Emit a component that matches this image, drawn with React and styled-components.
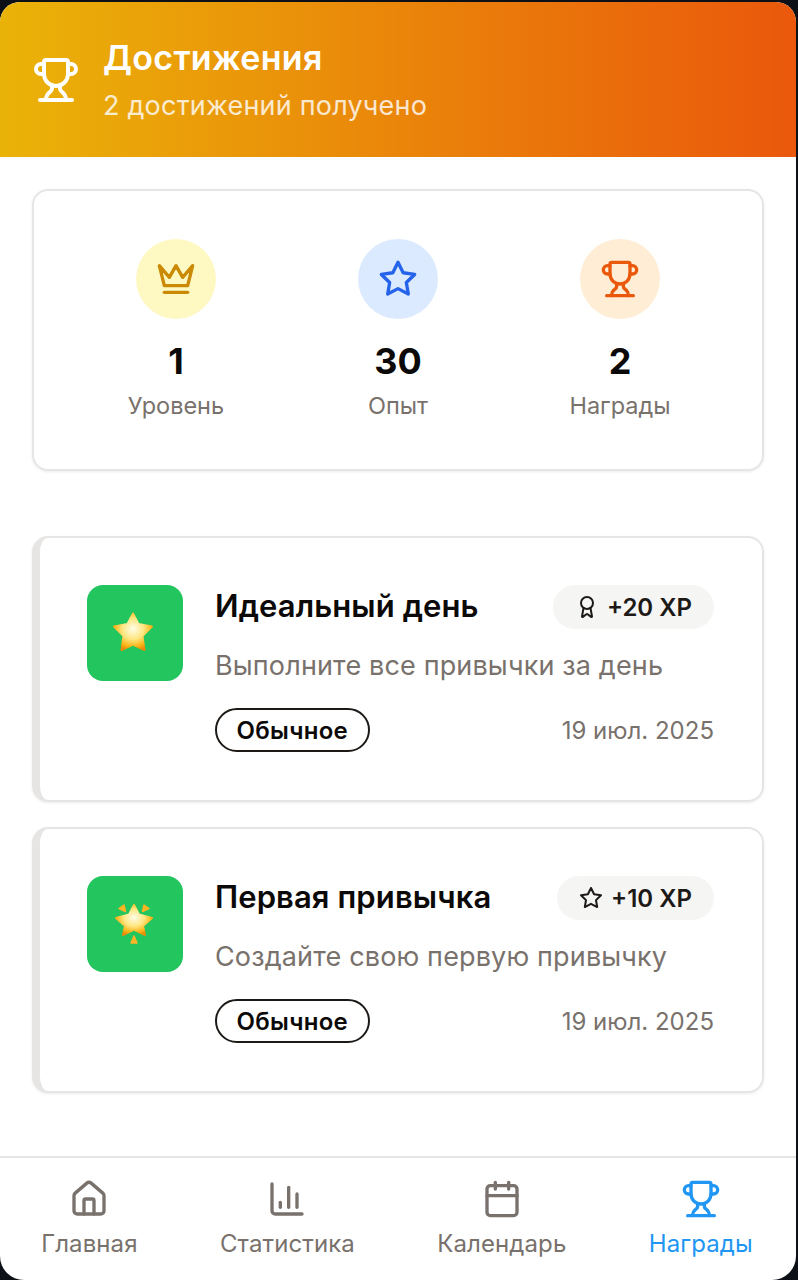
import React from 'react'
import styled, { createGlobalStyle } from 'styled-components'
import { Trophy, Award, House, ChartColumn, Calendar } from 'lucide-react'

const Global = createGlobalStyle`
  html, body {
    margin: 0;
    padding: 0;
    background: #0d1117;
  }
  * {
    box-sizing: border-box;
  }
`

const Screen = styled.div`
  width: 796px;
  height: 1278px;
  margin-top: 2px;
  display: flex;
  flex-direction: column;
  background: #fff;
  border-radius: 20px 20px 24px 24px;
  overflow: hidden;
  font-family: Inter, "Noto Sans", sans-serif;
  color: #0c0a09;
`

const Header = styled.header`
  height: 155px;
  flex-shrink: 0;
  display: flex;
  align-items: center;
  gap: 23px;
  padding: 0 32px;
  color: #fff;
  background: linear-gradient(90deg, #eab308, #ea580c);
`

const HeaderTitle = styled.div`
  font-size: 34px;
  line-height: 40px;
  font-weight: 600;
  letter-spacing: 0.3px;
`

const HeaderSub = styled.div`
  margin-top: 12px;
  font-size: 27px;
  line-height: 32px;
  letter-spacing: 0.2px;
  opacity: 0.8;
`

const Main = styled.main`
  flex: 1;
  display: flex;
  flex-direction: column;
  padding: 32px 32px 0;
`

const Panel = styled.section`
  height: 282px;
  flex-shrink: 0;
  border: 2px solid #e7e5e4;
  border-radius: 16px;
  box-shadow: 0 1px 3px rgba(0, 0, 0, 0.08);
  padding: 48px 31px 0;
  display: grid;
  grid-template-columns: repeat(3, 1fr);
  align-content: start;
`

const Stat = styled.div`
  display: flex;
  flex-direction: column;
  align-items: center;
`

const StatIcon = styled.div`
  width: 80px;
  height: 80px;
  border-radius: 50%;
  display: flex;
  align-items: center;
  justify-content: center;
  background: ${p => p.$bg};
  color: ${p => p.$fg};
`

const StatValue = styled.div`
  margin-top: 22px;
  font-size: 36px;
  line-height: 40px;
  font-weight: 700;
`

const StatLabel = styled.div`
  margin-top: 9px;
  font-size: 23.5px;
  line-height: 32px;
  color: #78716c;
`

const List = styled.div`
  margin-top: 65px;
  display: flex;
  flex-direction: column;
  gap: 25px;
`

const Card = styled.article`
  height: 266px;
  display: flex;
  gap: 32px;
  padding: 47px 48px 0 47px;
  border: 2px solid #e7e5e4;
  border-left-width: 8px;
  border-radius: 16px;
  box-shadow: 0 1px 3px rgba(0, 0, 0, 0.08);
`

const CardIcon = styled.div`
  width: 96px;
  height: 96px;
  flex-shrink: 0;
  border-radius: 16px;
  background: #22c55e;
  display: flex;
  align-items: center;
  justify-content: center;
`

const CardBody = styled.div`
  flex: 1;
  min-width: 0;
`

const Row = styled.div`
  display: flex;
  align-items: center;
  justify-content: space-between;
`

const CardTitle = styled.h3`
  margin: 0 0 2px;
  font-size: 31px;
  line-height: 42px;
  font-weight: 600;
  letter-spacing: 0.1px;
`

const Xp = styled.div`
  height: 44px;
  padding: 0 22px;
  display: flex;
  align-items: center;
  gap: 8px;
  border-radius: 22px;
  background: #f5f5f4;
  font-size: 24px;
  font-weight: 600;
  color: #1c1917;
`

const CardText = styled.p`
  margin: 21px 0 0;
  font-size: 27px;
  line-height: 32px;
  letter-spacing: 0.15px;
  color: #78716c;
`

const CardFoot = styled(Row)`
  margin-top: 26px;
`

const Tag = styled.span`
  height: 44px;
  padding: 0 19.5px;
  display: flex;
  align-items: center;
  border: 2px solid #1c1917;
  border-radius: 22px;
  font-size: 24px;
  font-weight: 600;
  letter-spacing: 0.3px;
`

const Date = styled.span`
  font-size: 24px;
  color: #78716c;
`

const Nav = styled.nav`
  height: 124px;
  flex-shrink: 0;
  display: flex;
  justify-content: space-around;
  padding: 21px 2px 0 0;
  border-top: 2px solid #e7e5e4;
`

const NavItem = styled.div`
  display: flex;
  flex-direction: column;
  align-items: center;
  gap: 9px;
  font-size: 24px;
  line-height: 32px;
  letter-spacing: 0.1px;
  color: ${p => (p.$active ? '#2196f3' : '#78716c')};
`

const Line = ({ size, children }) => (
  <svg width={size} height={size} viewBox="0 0 24 24" fill="none" stroke="currentColor" strokeWidth="2" strokeLinecap="round" strokeLinejoin="round">
    {children}
  </svg>
)

const CrownIcon = ({ size }) => (
  <Line size={size}>
    <path d="m2 4 3 12h14l3-12-6 7-4-7-4 7-6-7z" />
    <path d="M5 20h14" />
  </Line>
)

const StarIcon = ({ size }) => (
  <Line size={size}>
    <polygon points="12 2 15.09 8.26 22 9.27 17 14.14 18.18 21.02 12 17.77 5.82 21.02 7 14.14 2 9.27 8.91 8.26 12 2" />
  </Line>
)

const EmojiStar = ({ id, sparkle }) => (
  <svg width="48" height="48" viewBox="0 0 48 48" aria-hidden="true">
    <defs>
      <radialGradient id={id} cx="50%" cy="42%" r="60%">
        <stop offset="0%" stopColor="#fffde8" />
        <stop offset="48%" stopColor="#ffe680" />
        <stop offset="82%" stopColor="#fcb316" />
        <stop offset="100%" stopColor="#e98a0a" />
      </radialGradient>
    </defs>
    {sparkle ? (
      <>
        <path d="M23 5 L28 14.5 L41 18 L32 26 L34 35 L23 29.5 L12 35 L14 26 L5 18 L18 14.5 Z" fill={`url(#${id})`} stroke={`url(#${id})`} strokeWidth="2" strokeLinejoin="round" />
        <path d="M8 8.5 L13 5 L14.5 11.5 Z M38 8.5 L33 5 L31.5 11.5 Z M23 36 L26 43 L20 43 Z" fill="#fbb424" stroke="#fbb424" strokeWidth="1.5" strokeLinejoin="round" />
      </>
    ) : (
      <path d="M22 4.5 L27.5 15 L41 17.5 L31.5 27 L33.5 41 L22 35.5 L10.5 41 L12.5 27 L3 17.5 L16.5 15 Z" fill={`url(#${id})`} stroke={`url(#${id})`} strokeWidth="2" strokeLinejoin="round" />
    )}
  </svg>
)

const stats = [
  { icon: CrownIcon, value: '1', label: 'Уровень', bg: '#fef9c3', fg: '#ca8a04' },
  { icon: StarIcon, value: '30', label: 'Опыт', bg: '#dbeafe', fg: '#2563eb' },
  { icon: Trophy, value: '2', label: 'Награды', bg: '#ffedd5', fg: '#ea580c' },
]

const achievements = [
  { id: 'a', title: 'Идеальный день', xp: '+20 XP', icon: Award, text: 'Выполните все привычки за день' },
  { id: 'b', title: 'Первая привычка', xp: '+10 XP', icon: StarIcon, text: 'Создайте свою первую привычку', sparkle: true },
]

const tabs = [
  { icon: House, label: 'Главная' },
  { icon: ChartColumn, label: 'Статистика' },
  { icon: Calendar, label: 'Календарь' },
  { icon: Trophy, label: 'Награды', active: true },
]

const App = () => (
  <>
    <Global />
    <Screen>
      <Header>
        <Trophy size={48} color="#fff" strokeWidth={2} />
        <div>
          <HeaderTitle>Достижения</HeaderTitle>
          <HeaderSub>2 достижений получено</HeaderSub>
        </div>
      </Header>
      <Main>
        <Panel>
          {stats.map(s => (
            <Stat key={s.label}>
              <StatIcon $bg={s.bg} $fg={s.fg}>
                <s.icon size={40} />
              </StatIcon>
              <StatValue>{s.value}</StatValue>
              <StatLabel>{s.label}</StatLabel>
            </Stat>
          ))}
        </Panel>
        <List>
          {achievements.map(a => (
            <Card key={a.id}>
              <CardIcon>
                <EmojiStar id={`star-${a.id}`} sparkle={a.sparkle} />
              </CardIcon>
              <CardBody>
                <Row>
                  <CardTitle>{a.title}</CardTitle>
                  <Xp>
                    <a.icon size={24} />
                    {a.xp}
                  </Xp>
                </Row>
                <CardText>{a.text}</CardText>
                <CardFoot>
                  <Tag>Обычное</Tag>
                  <Date>19 июл. 2025</Date>
                </CardFoot>
              </CardBody>
            </Card>
          ))}
        </List>
      </Main>
      <Nav>
        {tabs.map(t => (
          <NavItem key={t.label} $active={t.active}>
            <t.icon size={40} strokeWidth={2} />
            {t.label}
          </NavItem>
        ))}
      </Nav>
    </Screen>
  </>
)

export default App
